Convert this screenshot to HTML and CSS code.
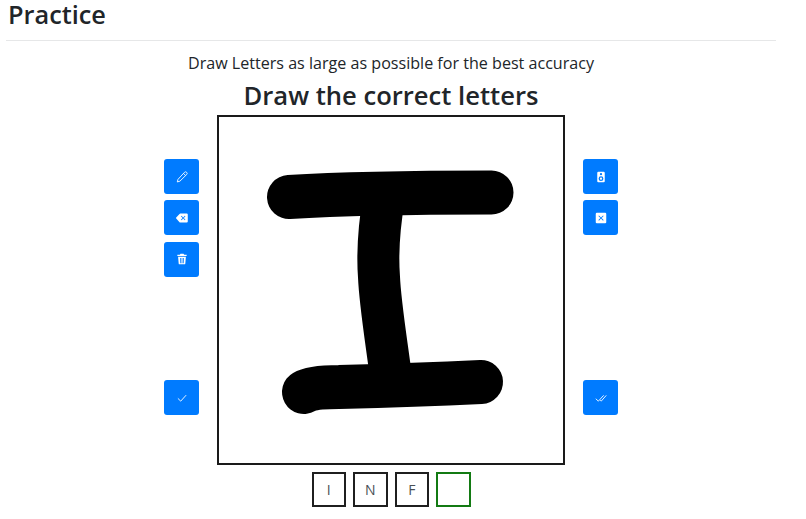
FILE: index.html
```html
<!DOCTYPE html>
<html lang="en">
<head>
<meta charset="utf-8">
<title>Practice</title>
<link rel="stylesheet" href="styles.css">
</head>
<body>
<main class="page">
  <h1 class="title">Practice</h1>
  <p class="hint">Draw Letters as large as possible for the best accuracy</p>
  <h2 class="subtitle">Draw the correct letters</h2>
  <div class="workspace">
    <div class="tools">
      <div class="tool-group">
        <button class="tool" aria-label="Pencil"><svg class="icon" viewBox="0 0 16 16"><path fill="none" stroke="currentColor" stroke-width="1.200" stroke-linejoin="round" d="M11.300 1.800a1.500 1.500 0 0 1 2.900 2.900L5.200 13.600l-3.500 1 1-3.500zM10 3.200l2.800 2.800"/></svg></button>
        <button class="tool" aria-label="Backspace"><svg class="icon" viewBox="0 0 16 16"><path fill="currentColor" fill-rule="evenodd" d="M15.700 3.300A1.400 1.400 0 0 0 14.300 2H5.800a1.500 1.500 0 0 0-1.100.5L.3 7.400a1 1 0 0 0 0 1.300l4.400 4.800a1.500 1.500 0 0 0 1.100.5h8.500a1.400 1.400 0 0 0 1.400-1.400zM7.400 5l-.8.8L8.800 8l-2.200 2.200.8.8 2.200-2.200 2.200 2.200.8-.8L10.400 8l2.200-2.200-.8-.8-2.200 2.200z"/></svg></button>
        <button class="tool" aria-label="Delete"><svg class="icon" viewBox="0 0 16 16"><path fill="currentColor" fill-rule="evenodd" d="M6 1h4l1 1.200h3.200v1.700H1.800V2.200H5zM2.800 5h10.400l-.8 9.200a1 1 0 0 1-1 .8H4.600a1 1 0 0 1-1-.8zM5.500 6.500l.3 7h1l-.3-7zM7.500 6.500v7h1v-7zM9.500 6.500l-.3 7h1l.3-7z"/></svg></button>
      </div>
      <button class="tool" aria-label="Check"><svg class="icon" viewBox="0 0 16 16"><path fill="none" stroke="currentColor" stroke-width="1.200" d="M2.500 8.500l3.800 3.700 7.200-8"/></svg></button>
    </div>
    <div class="canvas">
      <svg class="drawing" viewBox="0 0 344 346">
        <path class="bar" d="M70 80C110 77.500 180 75.500 272.500 75.500"/>
        <path class="stem" d="M165 80C160 110 158.500 140 160 160C161 185 166 215 172 260"/>
        <path class="bar" d="M85 275C92 271 105 270 120 270C160 269 220 267 262 265"/>
      </svg>
    </div>
    <div class="tools">
      <div class="tool-group">
        <button class="tool" aria-label="Speaker"><svg class="icon" viewBox="0 0 16 16"><path fill="currentColor" fill-rule="evenodd" d="M4.500 1h7A1.500 1.500 0 0 1 13 2.500v11a1.500 1.500 0 0 1-1.500 1.500h-7A1.500 1.500 0 0 1 3 13.500v-11A1.500 1.500 0 0 1 4.500 1zM8 2.800a1.500 1.500 0 1 0 0 3 1.500 1.500 0 0 0 0-3zM8 7a3.200 3.200 0 1 0 0 6.400A3.200 3.200 0 0 0 8 7zm0 1.700a1.500 1.500 0 1 1 0 3 1.500 1.500 0 0 1 0-3z"/></svg></button>
        <button class="tool" aria-label="Clear"><svg class="icon" viewBox="0 0 16 16"><path fill="currentColor" fill-rule="evenodd" d="M2.500 1h11A1.500 1.500 0 0 1 15 2.500v11a1.500 1.500 0 0 1-1.500 1.500h-11A1.500 1.500 0 0 1 1 13.500v-11A1.500 1.500 0 0 1 2.500 1zM5.300 4.500l-.8.800L7.200 8l-2.700 2.700.8.800L8 8.800l2.700 2.700.8-.8L8.800 8l2.700-2.700-.8-.8L8 7.200z"/></svg></button>
      </div>
      <button class="tool" aria-label="Check all"><svg class="icon" viewBox="0 0 16 16"><path fill="none" stroke="currentColor" stroke-width="1.200" d="M1 9l3.500 3.200L11.500 4.500M7 11l1.300 1.200L15 4.500"/></svg></button>
    </div>
  </div>
  <div class="letters">
    <span class="letter">I</span>
    <span class="letter">N</span>
    <span class="letter">F</span>
    <span class="letter letter-current"></span>
  </div>
</main>
</body>
</html>
```

FILE: styles.css
```css
* {
  box-sizing: border-box;
}

html,
body {
  margin: 0;
  background: #fff;
}

body {
  color: #212529;
  font-family: "Open Sans", "Noto Sans", sans-serif;
}

.page {
  width: 770px;
  margin-left: 6px;
  height: 519px;
}

.title {
  height: 41px;
  margin: 0;
  padding-left: 2px;
  border-bottom: 1px solid #e6e7e8;
  font-size: 25.300px;
  font-weight: 600;
  line-height: 28px;
}

.hint {
  margin: 11px 0 0;
  font-size: 16.100px;
  font-weight: 500;
  line-height: 22px;
  text-align: center;
}

.subtitle {
  margin: 3px 0 0;
  font-size: 25.600px;
  font-weight: 600;
  line-height: 38px;
  text-align: center;
}

.workspace {
  display: flex;
  justify-content: center;
  gap: 18px;
  height: 350px;
}

.tools {
  display: flex;
  flex-direction: column;
  justify-content: space-between;
  padding: 44px 0 50px;
}

.tool-group {
  display: flex;
  flex-direction: column;
  gap: 6.400px;
}

.tool {
  display: flex;
  align-items: center;
  justify-content: center;
  width: 35px;
  height: 35px;
  padding: 0;
  border: 0;
  border-radius: 3px;
  background: #007bff;
  color: #fff;
}

.icon {
  width: 12px;
  height: 12px;
}

.canvas {
  width: 348px;
  height: 350px;
  border: 2px solid #1a1a1a;
}

.drawing {
  display: block;
  width: 100%;
  height: 100%;
}

.drawing path {
  fill: none;
  stroke: #000;
  stroke-linecap: round;
  stroke-linejoin: round;
}

.drawing .bar {
  stroke-width: 44;
}

.drawing .stem {
  stroke-width: 42;
}

.letters {
  display: flex;
  justify-content: center;
  gap: 7px;
  margin-top: 7px;
}

.letter {
  display: flex;
  align-items: center;
  justify-content: center;
  width: 34.500px;
  height: 34.500px;
  border: 2px solid #1f1f1f;
  color: #4a4f54;
  font-size: 14px;
}

.letter-current {
  border-color: #137a13;
}
```
